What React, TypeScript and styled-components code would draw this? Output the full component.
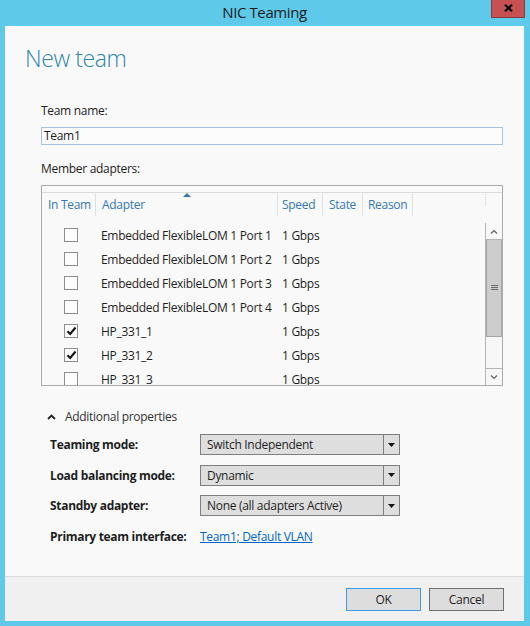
import React from 'react';
import styled, { createGlobalStyle } from 'styled-components';

const Global = createGlobalStyle`
  html, body { margin: 0; padding: 0; }
  body {
    font-family: "Open Sans", "Noto Sans", "Liberation Sans", sans-serif;
    font-size: 12px;
    letter-spacing: -0.3px;
    color: #1e1e1e;
  }
  * { box-sizing: border-box; }
`;

const Frame = styled.div`
  width: 530px;
  height: 626px;
  background: #5fc9ea;
  padding: 0 6px 5px 5px;
  display: flex;
  flex-direction: column;
`;

const TitleBar = styled.div`
  position: relative;
  height: 26px;
  display: flex;
  align-items: center;
  justify-content: center;
`;

const Title = styled.div`
  font-size: 15px;
  letter-spacing: -0.4px;
  color: #1c1c1c;
  line-height: 20px;
  margin-top: -2px;
`;

const CloseButton = styled.div`
  position: absolute;
  top: 0;
  right: -1px;
  width: 34px;
  height: 18px;
  background: #c75050;
  border: 1px solid #8a3a3a;
  border-top: none;
  display: flex;
  align-items: center;
  justify-content: center;
  padding-bottom: 1px;
`;

const Client = styled.div`
  flex: 1;
  background: #f9f9f9;
  display: flex;
  flex-direction: column;
`;

const Main = styled.div`
  flex: 1;
  padding: 0 21px 0 20px;
  display: flex;
  flex-direction: column;
`;

const Heading = styled.h1`
  margin: 16px 0 0 0;
  font-size: 23px;
  letter-spacing: -0.4px;
  line-height: 32px;
  font-weight: 300;
  color: #2d86ae;
`;

const Form = styled.div`
  padding-left: 16px;
  display: flex;
  flex-direction: column;
`;

const FieldLabel = styled.div<{ $top: number }>`
  margin-top: ${p => p.$top}px;
  line-height: 16px;
  color: #1e1e1e;
`;

const TextInput = styled.div`
  margin-top: 8px;
  height: 18px;
  border: 1px solid #a9c3dd;
  background: #fcfcfc;
  padding: 0 2px;
  line-height: 16px;
`;

const ListBox = styled.div`
  margin-top: 8px;
  height: 201px;
  border: 1px solid #ababab;
  background: #f9f9f9;
  display: flex;
  flex-direction: column;
`;

const HeaderBand = styled.div`
  height: 7px;
  border-bottom: 1px solid #dcdcdc;
  flex-shrink: 0;
`;

const HeaderRow = styled.div`
  height: 30px;
  display: flex;
  align-items: flex-start;
  flex-shrink: 0;
`;

const HeaderCell = styled.div<{ $w: number; $pl?: number; $light?: boolean }>`
  position: relative;
  width: ${p => p.$w}px;
  height: ${p => (p.$light ? 13 : 23)}px;
  border-right: 1px solid ${p => (p.$light ? '#e6e6e6' : '#e0e0e0')};
  padding-left: ${p => p.$pl ?? 6}px;
  line-height: 23px;
  color: #3478b4;
  white-space: nowrap;
  flex-shrink: 0;
`;

const SortArrow = styled.svg`
  position: absolute;
  top: 0;
  left: 50%;
  margin-left: -4px;
`;

const Body = styled.div`
  flex: 1;
  display: flex;
  min-height: 0;
`;

const Viewport = styled.div`
  flex: 1;
  overflow: hidden;
`;

const Row = styled.div`
  height: 24px;
  display: flex;
  align-items: center;
`;

const CheckCell = styled.div`
  width: 54px;
  padding-left: 22px;
  display: flex;
  align-items: center;
`;

const Box = styled.div`
  width: 14px;
  height: 14px;
  border: 1px solid #8e8f8f;
  background: #fdfdfd;
  display: flex;
  align-items: center;
  justify-content: center;
`;

const TextCell = styled.div<{ $w: number; $pl: number }>`
  width: ${p => p.$w}px;
  padding-left: ${p => p.$pl}px;
  white-space: nowrap;
  line-height: 24px;
  padding-top: 1px;
  flex-shrink: 0;
`;

const ScrollBar = styled.div`
  width: 17px;
  border-left: 1px solid #b4b4b4;
  display: flex;
  flex-direction: column;
  background: #f7f7f7;
`;

const ScrollButton = styled.div<{ $down?: boolean }>`
  height: 17px;
  flex-shrink: 0;
  display: flex;
  align-items: center;
  justify-content: center;
  ${p => (p.$down ? 'border-top: 1px solid #b4b4b4; margin-top: auto;' : 'border-bottom: 1px solid #b4b4b4;')}
`;

const Thumb = styled.div`
  height: 97px;
  background: #cdcdcd;
  border: 1px solid #a6a6a6;
  border-top: none;
  display: flex;
  align-items: center;
  justify-content: center;
`;

const Expander = styled.div`
  margin-top: 23px;
  padding-left: 6px;
  display: flex;
  align-items: center;
  gap: 9px;
  line-height: 16px;
  color: #333;
`;

const PropGrid = styled.div`
  margin-top: 9px;
  padding-left: 9px;
  display: grid;
  grid-template-columns: 150px 200px;
  grid-auto-rows: 21px;
  row-gap: 9.5px;
  align-items: center;
`;

const PropLabel = styled.div`
  font-weight: bold;
  line-height: 21px;
  white-space: nowrap;
`;

const Select = styled.div`
  height: 21px;
  border: 1px solid #7e7e7e;
  background: #dedede;
  display: flex;
`;

const SelectText = styled.div`
  flex: 1;
  padding-left: 6px;
  line-height: 19px;
  white-space: nowrap;
`;

const SelectArrow = styled.div`
  width: 16px;
  border-left: 1px solid #7e7e7e;
  display: flex;
  align-items: center;
  justify-content: center;
`;

const Link = styled.a`
  color: #0066cc;
  text-decoration: underline;
  line-height: 21px;
  cursor: pointer;
`;

const Footer = styled.div`
  height: 45px;
  border-top: 1px solid #dcdcdc;
  background: #f0f0f0;
  display: flex;
  align-items: center;
  justify-content: flex-end;
  gap: 8px;
  padding-right: 20px;
`;

const Button = styled.div<{ $default?: boolean }>`
  width: 75px;
  height: 23px;
  border: 1px solid ${p => (p.$default ? '#3c9ae8' : '#707070')};
  background: #dddddd;
  display: flex;
  align-items: center;
  justify-content: center;
  color: #1e1e1e;
`;

const adapters = [
  { name: 'Embedded FlexibleLOM 1 Port 1', checked: false },
  { name: 'Embedded FlexibleLOM 1 Port 2', checked: false },
  { name: 'Embedded FlexibleLOM 1 Port 3', checked: false },
  { name: 'Embedded FlexibleLOM 1 Port 4', checked: false },
  { name: 'HP_331_1', checked: true },
  { name: 'HP_331_2', checked: true },
  { name: 'HP_331_3', checked: false },
];

const Check = () => (
  <svg width="11" height="10" viewBox="0 0 11 10">
    <path d="M1.5 5.2 L4.2 8 L9.5 1.5" fill="none" stroke="#111" strokeWidth="2" />
  </svg>
);

const DropArrow = () => (
  <svg width="7" height="4" viewBox="0 0 7 4">
    <path d="M0 0 H7 L3.5 4 Z" fill="#111" />
  </svg>
);

const Dropdown = ({ value }: { value: string }) => (
  <Select>
    <SelectText>{value}</SelectText>
    <SelectArrow>
      <DropArrow />
    </SelectArrow>
  </Select>
);

export default function App() {
  return (
    <>
      <Global />
      <Frame>
        <TitleBar>
          <Title>NIC Teaming</Title>
          <CloseButton>
            <svg width="9" height="8" viewBox="0 0 9 8">
              <path d="M1 0.8 L8 7.2 M8 0.8 L1 7.2" stroke="#000" strokeWidth="2.2" />
            </svg>
          </CloseButton>
        </TitleBar>
        <Client>
          <Main>
            <Heading>New team</Heading>
            <Form>
              <FieldLabel $top={29}>Team name:</FieldLabel>
              <TextInput>Team1</TextInput>
              <FieldLabel $top={16}>Member adapters:</FieldLabel>
              <ListBox>
                <HeaderBand />
                <HeaderRow>
                  <HeaderCell $w={54}>In Team</HeaderCell>
                  <HeaderCell $w={182}>
                    <SortArrow width="8" height="4" viewBox="0 0 8 4">
                      <path d="M0 4 L4 0 L8 4 Z" fill="#3478b4" />
                    </SortArrow>
                    Adapter
                  </HeaderCell>
                  <HeaderCell $w={45} $pl={4}>Speed</HeaderCell>
                  <HeaderCell $w={40} $pl={6}>State</HeaderCell>
                  <HeaderCell $w={50} $pl={5}>Reason</HeaderCell>
                  <HeaderCell $w={73} $light />
                </HeaderRow>
                <Body>
                  <Viewport>
                    {adapters.map(a => (
                      <Row key={a.name}>
                        <CheckCell>
                          <Box>{a.checked && <Check />}</Box>
                        </CheckCell>
                        <TextCell $w={182} $pl={5}>{a.name}</TextCell>
                        <TextCell $w={80} $pl={4}>1 Gbps</TextCell>
                      </Row>
                    ))}
                  </Viewport>
                  <ScrollBar>
                    <ScrollButton>
                      <svg width="8" height="5" viewBox="0 0 8 5">
                        <path d="M1 4.5 L4 1.5 L7 4.5" fill="none" stroke="#606060" strokeWidth="1.2" />
                      </svg>
                    </ScrollButton>
                    <Thumb>
                      <svg width="7" height="6" viewBox="0 0 7 6">
                        <path d="M0 0.5 H7 M0 2.5 H7 M0 4.5 H7" stroke="#6a6a6a" strokeWidth="1" />
                      </svg>
                    </Thumb>
                    <ScrollButton $down>
                      <svg width="8" height="5" viewBox="0 0 8 5">
                        <path d="M1 0.5 L4 3.5 L7 0.5" fill="none" stroke="#606060" strokeWidth="1.2" />
                      </svg>
                    </ScrollButton>
                  </ScrollBar>
                </Body>
              </ListBox>
              <Expander>
                <svg width="9" height="6" viewBox="0 0 9 6">
                  <path d="M1 5 L4.5 1.5 L8 5" fill="none" stroke="#222" strokeWidth="1.8" />
                </svg>
                Additional properties
              </Expander>
              <PropGrid>
                <PropLabel>Teaming mode:</PropLabel>
                <Dropdown value="Switch Independent" />
                <PropLabel>Load balancing mode:</PropLabel>
                <Dropdown value="Dynamic" />
                <PropLabel>Standby adapter:</PropLabel>
                <Dropdown value="None (all adapters Active)" />
                <PropLabel>Primary team interface:</PropLabel>
                <div>
                  <Link>Team1; Default VLAN</Link>
                </div>
              </PropGrid>
            </Form>
          </Main>
          <Footer>
            <Button $default>OK</Button>
            <Button>Cancel</Button>
          </Footer>
        </Client>
      </Frame>
    </>
  );
}
